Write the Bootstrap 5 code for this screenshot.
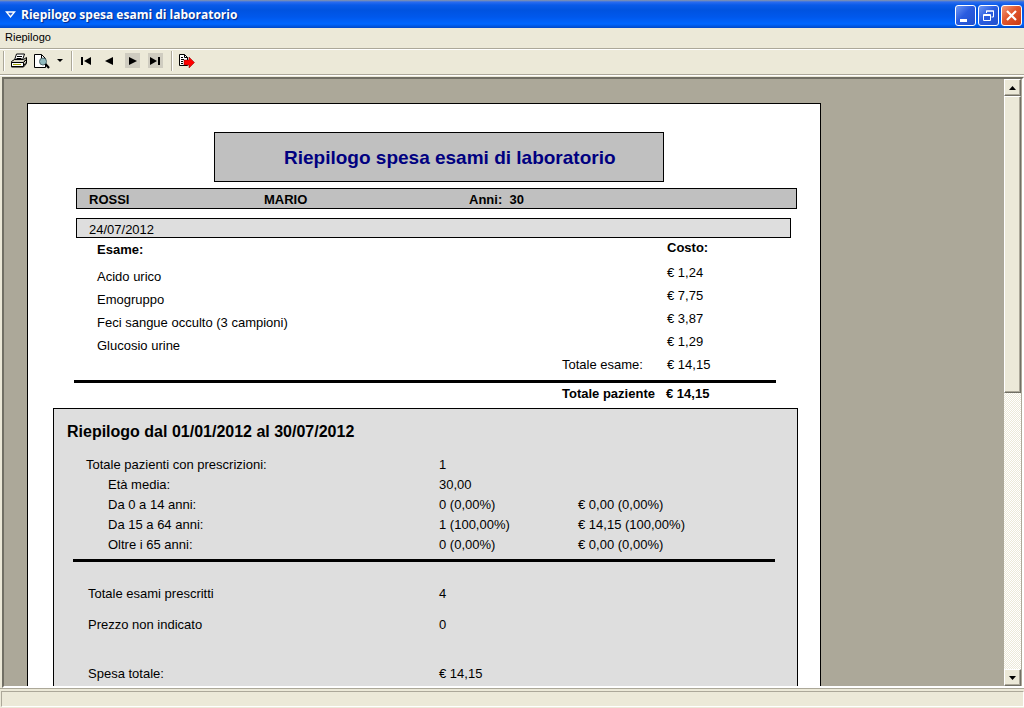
<!DOCTYPE html>
<html lang="it">
<head>
<meta charset="utf-8">
<meta name="viewport" content="width=device-width, initial-scale=1">
<title>Riepilogo spesa esami di laboratorio</title>
<link href="https://cdn.jsdelivr.net/npm/bootstrap@5.3.0/dist/css/bootstrap.min.css" rel="stylesheet">
<style>
  :root { --face: #ece9d8; --shadow: #aca899; --dark: #716f64; }
  body { background: var(--face); color: #000; font: 13px/18px "Liberation Sans", Arial, sans-serif; }
  button { background: none; border: 0; padding: 0; color: inherit; }

  .titlebar {
    height: 28px; color: #fff; padding: 2px 2px 0 5px;
    font: bold 12px/26px "Open Sans", "Trebuchet MS", sans-serif;
    text-shadow: 1px 1px 1px #0a2a80;
    background: linear-gradient(#8a96a8 0, #2b6cf0 2px, #0a5be8 5px, #0053e0 10px, #0058ec 17px, #0066ff 24px, #0048c8 28px);
  }
  .titlebar h1 { font: inherit; margin: 0 0 0 4px; }
  .caption-btns { gap: 2px; }
  .caption-btn {
    width: 21px; height: 21px; border: 1px solid #fff; border-radius: 3px;
    background: linear-gradient(135deg, #6f98f4, #2a5ce0 45%, #2250cc);
  }
  .caption-btn.closer { background: linear-gradient(135deg, #f09a7c, #e2562c 45%, #c93a14); }
  .caption-btn svg, .tool svg, .arrow-btn svg { display: block; margin: auto; }

  .menubar { height: 20px; font-size: 11px; padding-left: 5px; }
  .toolstrip { height: 27px; border-top: 1px solid var(--shadow); border-bottom: 1px solid var(--shadow); box-shadow: inset 0 1px #fff, 0 1px #fff; padding-left: 3px; padding-bottom: 2px; }
  .tool { width: 23px; height: 22px; }
  .tool.narrow { width: 14px; }
  .tool.off svg { background: #cfccc0; }
  .divider { width: 2px; height: 20px; border-left: 1px solid var(--shadow); border-right: 1px solid #fff; margin-right: 2px; }
  .tool + .divider { margin-left: 4px; }

  .viewer { min-height: 0; margin-top: 2px; border: 2px solid; border-color: var(--dark) #fff #fff var(--dark); margin-left: 2px; background: var(--shadow); }
  .canvas { min-width: 0; padding: 24px 24px 0 23px; }
  .paper { max-width: 794px; background: #fff; border: 1px solid #000; padding-top: 28px; height: 1123px; }

  .scroller { width: 18px; background: repeating-conic-gradient(#fff 0 25%, #ece9d8 0 50%) 0 0 / 2px 2px; border-right: 1px solid var(--shadow); }
  .arrow-btn, .thumb { background: var(--face); border: 1px solid; border-color: #fff var(--dark) var(--dark) #fff; box-shadow: inset -1px -1px var(--shadow); }
  .arrow-btn { height: 17px; }
  .thumb { flex: 0 0 49%; }

  .statusbar { height: 20px; border-top: 1px solid var(--shadow); padding: 2px 0 1px 1px; }
  .statusbar div { height: 100%; border: 1px solid; border-color: var(--shadow) #fff #fff var(--shadow); }

  .report-title { margin: 0 156px 0 186px; height: 50px; padding-left: 69px; background: #c0c0c0; border: 1px solid #000; color: #000080; font-size: 19px; line-height: 50px; font-weight: bold; }
  .patient { display: grid; grid-template-columns: 175px 205px 1fr; height: 21px; margin: 6px 23px 9px 48px; padding: 2px 0 0 12px; background: #c0c0c0; border: 1px solid #000; font-weight: bold; }
  .visit { height: 20px; margin: 0 29px 0 48px; padding: 3px 0 0 12px; line-height: 16px; background: #dedede; border: 1px solid #000; }
  .rule { height: 3px; background: #000; margin: 1px 44px 0 46px; }

  .exams { width: calc(100% - 69px); margin-left: 69px; table-layout: fixed; }
  .exams th, .exams td, .sums th, .sums td { padding: 0; vertical-align: top; white-space: nowrap; }
  .exams thead tr { height: 26px; }
  .exams tbody tr, .exams tfoot tr { height: 23px; }
  .exams tbody td:first-child { padding-top: 4px; }
  .exams thead th { padding-top: 1px; }
  .exams thead th:first-child { padding-top: 3px; }
  .exams .money { width: 153px; }
  .exams .sub { width: 105px; }
  .patient-total { display: grid; grid-template-columns: 1fr 104px 154px; padding-top: 2px; font-weight: bold; }
  .patient-total span:first-child { grid-column: 2; }

  .summary { margin: 5px 22px 0 25px; height: 700px; background: #dedede; border: 1px solid #000; padding-top: 13px; }
  .summary h2 { font-size: 16px; line-height: 20px; font-weight: bold; margin: 0 0 14px 13px; }
  .summary .rule { margin: 3px 22px 0 19px; }
  .sums { width: calc(100% - 32px); margin-left: 32px; table-layout: fixed; }
  .sums th { font-weight: normal; width: 353px; }
  .sums .count { width: 139px; }
  .sums tr { height: 20px; }
  .sums .inner th { padding-left: 22px; }
  .totals { margin-top: 23px; }
  .totals th { padding-left: 2px; }
  .totals tr { height: 31px; }
  .totals tr.gap { height: 49px; }
</style>
</head>
<body class="vh-100 d-flex flex-column overflow-hidden">

<header class="titlebar d-flex align-items-center flex-shrink-0">
  <svg class="flex-shrink-0" width="12" height="12" viewBox="0 0 12 12"><path d="M1.500 3h8L5.500 8z" fill="#2b62d8" stroke="#fff" stroke-width="1.400"/></svg>
  <h1 class="flex-grow-1 text-truncate">Riepilogo spesa esami di laboratorio</h1>
  <div class="caption-btns d-flex flex-shrink-0">
    <button class="caption-btn" type="button" aria-label="Riduci a icona"><svg width="19" height="19"><path d="M4 13h7v3H4z" fill="#fff"/></svg></button>
    <button class="caption-btn" type="button" aria-label="Ripristina"><svg width="19" height="19" fill="none" stroke="#fff"><path d="M7.500 7V5h7v6h-2M7 5h8" /><path d="M4.500 8.500h7v6h-7zM4 9.500h8"/></svg></button>
    <button class="caption-btn closer" type="button" aria-label="Chiudi"><svg width="19" height="19"><path d="M5 5l9 9M14 5l-9 9" stroke="#fff" stroke-width="2.200"/></svg></button>
  </div>
</header>

<nav class="menubar flex-shrink-0"><button type="button">Riepilogo</button></nav>

<div class="toolstrip d-flex align-items-center flex-shrink-0" role="toolbar" aria-label="Anteprima">
  <span class="divider"></span>
  <button class="tool" type="button" aria-label="Stampa">
    <svg width="18" height="16" viewBox="0 0 18 16" stroke="#000" fill="#fff"><path d="M4.500 7l2-6h8l-2 6z"/><path d="M7 3.500h5M6.500 5.500h5" /><path d="M1.500 8.500l3-2h9l3-2v6l-3 3.500h-12z" fill="#d8d5c4"/><path d="M1.500 9.500h12v4h-12zM13.500 9.500l3-3"/><path d="M3 11.500h8" stroke="#a0a000"/><path d="M14 8.500l2-2M14 12l2-2.500"/></svg>
  </button>
  <button class="tool" type="button" aria-label="Anteprima di stampa">
    <svg width="17" height="16" viewBox="0 0 17 16"><path d="M1.500 1.500h7l4 4v9h-11z" fill="#fff" stroke="#000"/><path d="M8.500 1.500v4h4" fill="none" stroke="#000"/><circle cx="10" cy="8.500" r="3.500" fill="#8fb9bd" stroke="#50686c"/><path d="M12.500 11l3.500 4" stroke="#000" stroke-width="2"/></svg>
  </button>
  <button class="tool narrow" type="button" aria-label="Opzioni di anteprima"><svg width="6" height="3"><path d="M0 0h6L3 3z"/></svg></button>
  <span class="divider"></span>
  <button class="tool" type="button" aria-label="Prima pagina"><svg width="15" height="15"><path d="M2 4h2v8H2zM12 4v8L5 8z"/></svg></button>
  <button class="tool" type="button" aria-label="Pagina precedente"><svg width="15" height="15"><path d="M11 4v8L3 8z"/></svg></button>
  <button class="tool off" type="button" aria-label="Pagina successiva"><svg width="15" height="15"><path d="M4 4v8l8-4z"/></svg></button>
  <button class="tool off" type="button" aria-label="Ultima pagina"><svg width="15" height="15"><path d="M2 4v8l7-4zM10 4h2v8h-2z"/></svg></button>
  <span class="divider"></span>
  <button class="tool" type="button" aria-label="Esporta">
    <svg width="17" height="16" viewBox="0 0 17 16"><path d="M1.500 1.500h5l3 3v8h-8z" fill="#fff" stroke="#000"/><path d="M6.500 1.500v3h3M3 4.500h2M3 6.500h3M3 8.500h2M3 10.500h2" fill="none" stroke="#000"/><path d="M6 7h5V4l5.500 5.500L11 15v-3H6z" fill="#f00" stroke="#800000" stroke-width=".5"/></svg>
  </button>
</div>

<main class="viewer d-flex flex-grow-1">
  <div class="canvas flex-grow-1 overflow-hidden">
    <article class="paper">
      <h2 class="report-title mb-0 text-nowrap">Riepilogo spesa esami di laboratorio</h2>
      <div class="patient"><span>ROSSI</span><span>MARIO</span><span>Anni:&nbsp; 30</span></div>
      <div class="visit">24/07/2012</div>
      <table class="exams">
        <thead><tr><th>Esame:</th><th class="sub"></th><th class="money">Costo:</th></tr></thead>
        <tbody>
          <tr><td>Acido urico</td><td></td><td>€ 1,24</td></tr>
          <tr><td>Emogruppo</td><td></td><td>€ 7,75</td></tr>
          <tr><td>Feci sangue occulto (3 campioni)</td><td></td><td>€ 3,87</td></tr>
          <tr><td>Glucosio urine</td><td></td><td>€ 1,29</td></tr>
        </tbody>
        <tfoot><tr><td></td><td>Totale esame:</td><td>€ 14,15</td></tr></tfoot>
      </table>
      <div class="rule"></div>
      <div class="patient-total"><span>Totale paziente</span><span>€ 14,15</span></div>

      <section class="summary">
        <h2>Riepilogo dal 01/01/2012 al 30/07/2012</h2>
        <table class="sums">
          <tbody>
            <tr><th>Totale pazienti con prescrizioni:</th><td class="count">1</td><td></td></tr>
            <tr class="inner"><th>Età media:</th><td>30,00</td><td></td></tr>
            <tr class="inner"><th>Da 0 a 14 anni:</th><td>0 (0,00%)</td><td>€ 0,00 (0,00%)</td></tr>
            <tr class="inner"><th>Da 15 a 64 anni:</th><td>1 (100,00%)</td><td>€ 14,15 (100,00%)</td></tr>
            <tr class="inner"><th>Oltre i 65 anni:</th><td>0 (0,00%)</td><td>€ 0,00 (0,00%)</td></tr>
          </tbody>
        </table>
        <div class="rule"></div>
        <table class="sums totals">
          <tbody>
            <tr><th>Totale esami prescritti</th><td>4</td></tr>
            <tr class="gap"><th>Prezzo non indicato</th><td>0</td></tr>
            <tr><th>Spesa totale:</th><td>€ 14,15</td></tr>
          </tbody>
        </table>
      </section>
    </article>
  </div>
  <div class="scroller d-flex flex-column flex-shrink-0">
    <button class="arrow-btn flex-shrink-0" type="button" aria-label="Scorri su"><svg width="7" height="4"><path d="M0 4h7L3.500 0z"/></svg></button>
    <div class="thumb"></div>
    <button class="arrow-btn flex-shrink-0 mt-auto" type="button" aria-label="Scorri giù"><svg width="7" height="4"><path d="M0 0h7L3.500 4z"/></svg></button>
  </div>
</main>

<footer class="statusbar flex-shrink-0"><div></div></footer>

<script src="https://cdn.jsdelivr.net/npm/bootstrap@5.3.0/dist/js/bootstrap.bundle.min.js"></script>
</body>
</html>
